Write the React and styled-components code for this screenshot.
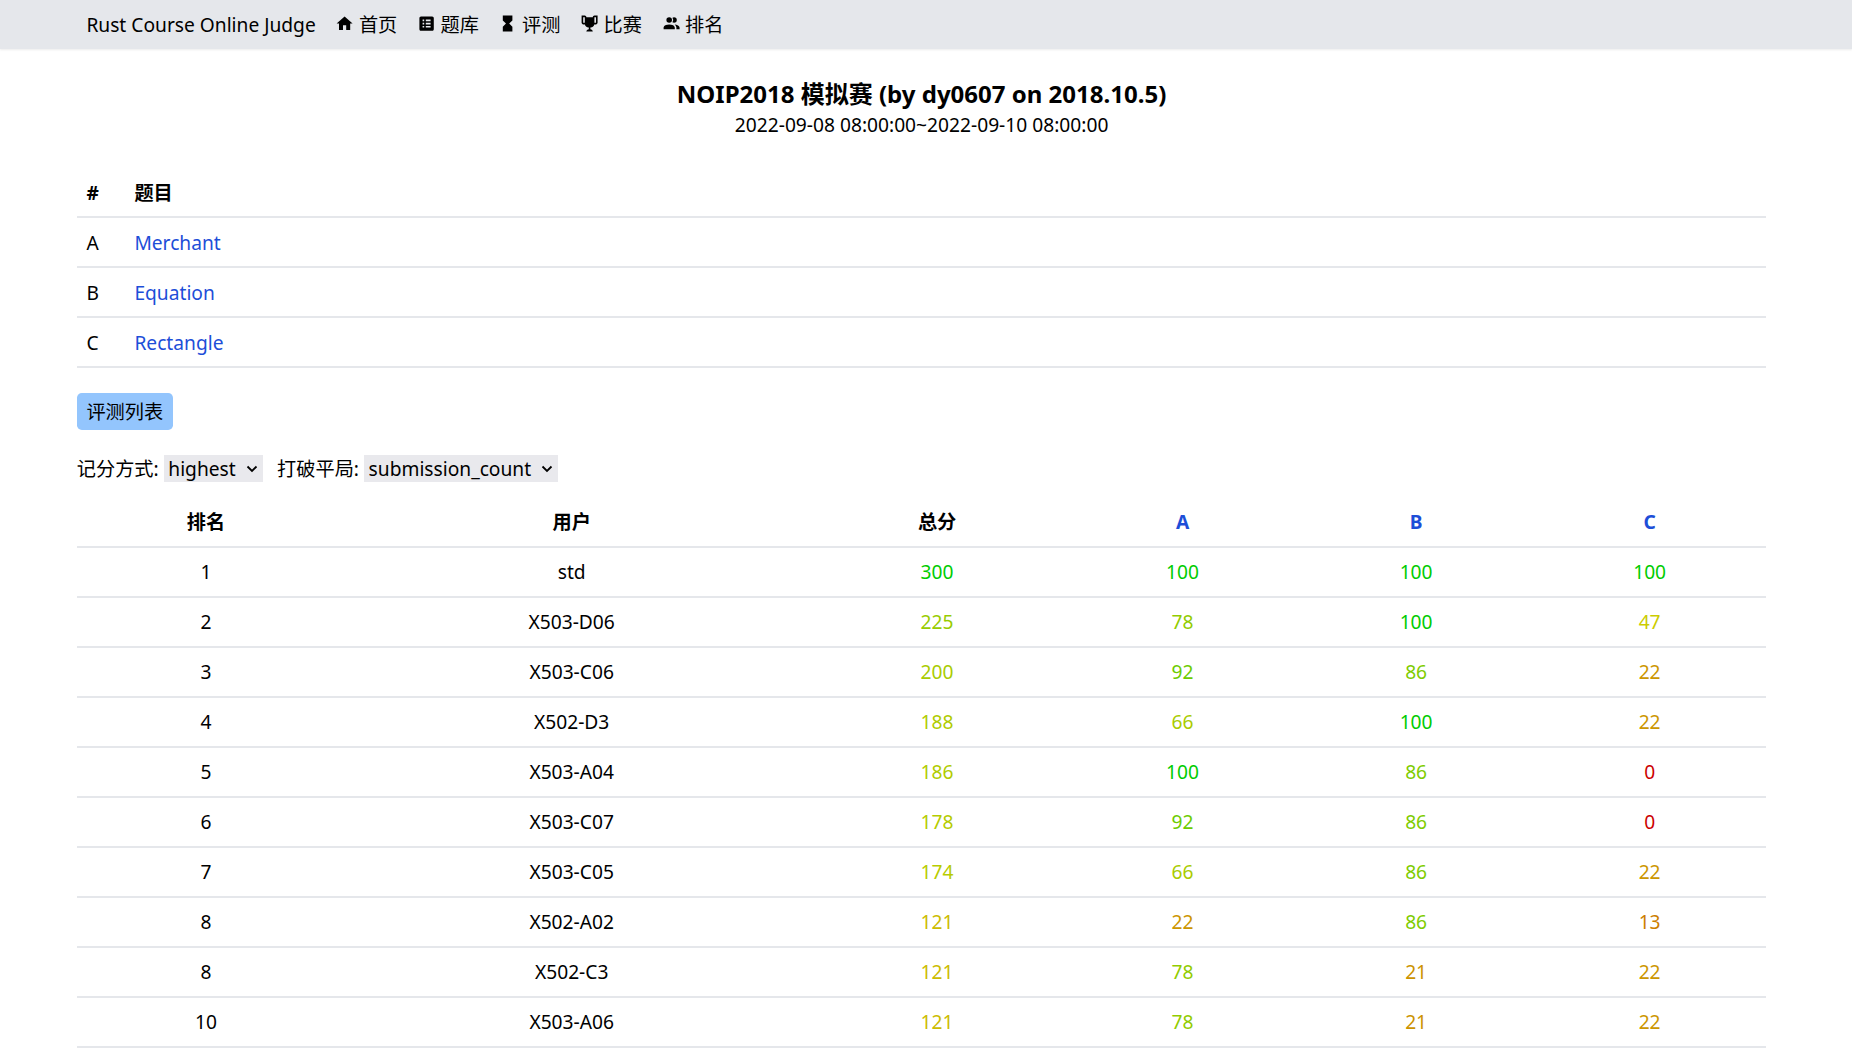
import React from "react";
import styled, { createGlobalStyle } from "styled-components";

const Global = createGlobalStyle`
  *, *::before, *::after { box-sizing: border-box; }
  html { font-size: 19.2px; overflow: hidden; }
  body {
    margin: 0;
    background: #fff;
    color: #000;
    font-family: "Noto Sans", "Noto Sans CJK SC", sans-serif;
    line-height: 28.8px;
  }
  a { color: inherit; text-decoration: none; }
`;

const Page = styled.div`
  height: 1053px;
  overflow: hidden;
`;

const Nav = styled.nav`
  display: flex;
  align-items: center;
  gap: 19.6px;
  height: 49px;
  padding: 2px 86.4px 0;
  background: #e5e7eb;
  box-shadow: 0 1px 2px rgba(0, 0, 0, 0.08);
`;

const NavLink = styled.a`
  display: flex;
  align-items: center;
  gap: 4.4px;
  white-space: nowrap;
`;

const Icon = styled.svg`
  width: 19.2px;
  height: 19.2px;
  margin-top: -3px;
  fill: currentColor;
`;

const Main = styled.main`
  width: 1689.6px;
  margin-left: 76.8px;
`;

const Heading = styled.header`
  padding-top: 28px;
  height: 119px;
  text-align: center;
`;

const Title = styled.h1`
  margin: 0 0 0.8px;
  font-size: 24px;
  line-height: 33.6px;
  font-weight: 700;
`;

const Table = styled.table`
  width: 100%;
  table-layout: fixed;
  border-collapse: separate;
  border-spacing: 0;
  text-align: ${(p) => p.$align};
`;

const Col = styled.col`
  width: ${(p) => p.$w};
`;

const Row = styled.tr`
  height: 50px;
`;

const Head = styled.th`
  padding: ${(p) => p.$top || "0"} 9.6px 0;
  border-bottom: 2px solid #e5e7eb;
  font-weight: 700;
  text-align: inherit;
  color: ${(p) => p.$color || "inherit"};
`;

const Cell = styled.td`
  padding: ${(p) => p.$top || "0"} 9.6px 0;
  border-bottom: 2px solid #e5e7eb;
  color: ${(p) => p.$color || "inherit"};
`;

const Button = styled.a`
  display: flex;
  align-items: center;
  width: fit-content;
  height: 37px;
  margin-top: 25px;
  padding: 2px 9.6px 0;
  border-radius: 4.8px;
  background: #93c5fd;
`;

const Filters = styled.div`
  display: flex;
  align-items: center;
  height: 27px;
  margin: 25px 0 16px;
`;

const Label = styled.label`
  display: flex;
  align-items: center;
  gap: 5px;
  margin-right: 14.4px;
  white-space: nowrap;
`;

const LabelText = styled.span`
  padding-top: 2px;
`;

const SelectBox = styled.span`
  display: grid;
  align-items: center;
  width: ${(p) => p.$w}px;
  height: 27px;
  background: #e9e9ed;
`;

const Select = styled.select`
  grid-area: 1 / 1;
  appearance: none;
  width: 100%;
  height: 27px;
  padding: 0 4.6px;
  border: 0;
  background: transparent;
  color: #000;
  font: inherit;
`;

const Chevron = styled.svg`
  grid-area: 1 / 1;
  justify-self: end;
  width: 12px;
  height: 8px;
  margin-right: 5px;
  fill: none;
  stroke: #000;
  stroke-width: 1.8;
  pointer-events: none;
`;

const LINK = "#1d4ed8";

const NAV = [
  ["首页", "M10 20v-6h4v6h5v-8h3L12 3 2 12h3v8z"],
  ["题库", "M19 3H5c-1.1 0-2 .9-2 2v14c0 1.1.9 2 2 2h14c1.1 0 2-.9 2-2V5c0-1.1-.9-2-2-2M7 7h2v2H7V7m0 4h2v2H7v-2m0 4h2v2H7v-2m10 2h-6v-2h6v2m0-4h-6v-2h6v2m0-4h-6V7h6v2z"],
  ["评测", "M6 2v6l4 4-4 4v6h12v-6l-4-4 4-4V2z"],
  ["比赛", "M18 2c-.9 0-2 1-2 2H8c0-1-1.1-2-2-2H2v9c0 1 1 2 2 2h2.2c.4 2 1.7 3.7 4.8 4v2.08C8 19.54 8 22 8 22h8s0-2.46-3-2.92V17c3.1-.3 4.4-2 4.8-4H20c1 0 2-1 2-2V2h-4M6 11H4V4h2v7m14 0h-2V4h2v7z"],
  ["排名", "M16 17v2H2v-2s0-4 7-4 7 4 7 4m-3.5-9.5A3.5 3.5 0 1 0 9 11a3.5 3.5 0 0 0 3.5-3.5m3.44 5.5A5.32 5.32 0 0 1 18 17v2h4v-2s0-3.63-6.06-4M15 4a3.39 3.39 0 0 0-1.93.59 5 5 0 0 1 0 5.82A3.39 3.39 0 0 0 15 11a3.5 3.5 0 0 0 0-7z"],
];

const PROBLEMS = [["A", "Merchant"], ["B", "Equation"], ["C", "Rectangle"]];

const RANKS = [
  [1, "std", 300, 100, 100, 100],
  [2, "X503-D06", 225, 78, 100, 47],
  [3, "X503-C06", 200, 92, 86, 22],
  [4, "X502-D3", 188, 66, 100, 22],
  [5, "X503-A04", 186, 100, 86, 0],
  [6, "X503-C07", 178, 92, 86, 0],
  [7, "X503-C05", 174, 66, 86, 22],
  [8, "X502-A02", 121, 22, 86, 13],
  [8, "X502-C3", 121, 78, 21, 22],
  [10, "X503-A06", 121, 78, 21, 22],
];

// Piecewise hue scale from red (0) through yellow to green (full marks).
const STOPS = [[0, 0], [0.13, 37], [0.22, 44], [0.4, 55], [0.47, 60], [0.6, 67], [0.66, 70], [0.78, 77], [0.86, 83], [0.92, 88], [1, 120]];
const scoreColor = (ratio) => {
  const i = Math.max(1, STOPS.findIndex(([r]) => ratio <= r));
  const [r0, h0] = STOPS[i - 1];
  const [r1, h1] = STOPS[i];
  return `hsl(${h0 + ((h1 - h0) * (ratio - r0)) / (r1 - r0)}, 100%, 40%)`;
};

function Picker({ label, value, width }) {
  return (
    <Label>
      <LabelText>{label}</LabelText>
      <SelectBox $w={width}>
        <Select defaultValue={value}>
          <option>{value}</option>
        </Select>
        <Chevron viewBox="0 0 12 8"><path d="M1.5 1.5 6 6l4.5-4.5" /></Chevron>
      </SelectBox>
    </Label>
  );
}

export default function App() {
  return (
    <Page>
      <Global />
      <Nav>
        <NavLink href="#">Rust Course Online Judge</NavLink>
        {NAV.map(([name, d]) => (
          <NavLink href="#" key={name}>
            <Icon viewBox="0 0 24 24"><path d={d} fillRule="evenodd" /></Icon>
            {name}
          </NavLink>
        ))}
      </Nav>
      <Main>
        <Heading>
          <Title>NOIP2018 模拟赛 (by dy0607 on 2018.10.5)</Title>
          2022-09-08 08:00:00~2022-09-10 08:00:00
        </Heading>
        <Table $align="left">
          <colgroup><Col $w="48px" /><Col $w="auto" /></colgroup>
          <thead><Row><Head $top="2px">#</Head><Head $top="2px">题目</Head></Row></thead>
          <tbody>
            {PROBLEMS.map(([id, name]) => (
              <Row key={id}>
                <Cell $top="2px">{id}</Cell>
                <Cell $top="2px" $color={LINK}><a href="#">{name}</a></Cell>
              </Row>
            ))}
          </tbody>
        </Table>
        <Button href="#">评测列表</Button>
        <Filters>
          <Picker label="记分方式:" value="highest" width={99} />
          <Picker label="打破平局:" value="submission_count" width={194} />
        </Filters>
        <Table $align="center">
          <colgroup>
            <Col $w="258.2px" /><Col $w="473.4px" /><Col $w="257.4px" />
            <Col $w="233.6px" /><Col $w="233.5px" /><Col $w="auto" />
          </colgroup>
          <thead>
            <Row>
              <Head>排名</Head><Head>用户</Head><Head>总分</Head>
              {PROBLEMS.map(([id]) => <Head key={id} $color={LINK}><a href="#">{id}</a></Head>)}
            </Row>
          </thead>
          <tbody>
            {RANKS.map(([rank, user, total, ...scores]) => (
              <Row key={user}>
                <Cell>{rank}</Cell>
                <Cell>{user}</Cell>
                <Cell $color={scoreColor(total / 300)}>{total}</Cell>
                {scores.map((s, i) => <Cell key={i} $color={scoreColor(s / 100)}>{s}</Cell>)}
              </Row>
            ))}
          </tbody>
        </Table>
      </Main>
    </Page>
  );
}
